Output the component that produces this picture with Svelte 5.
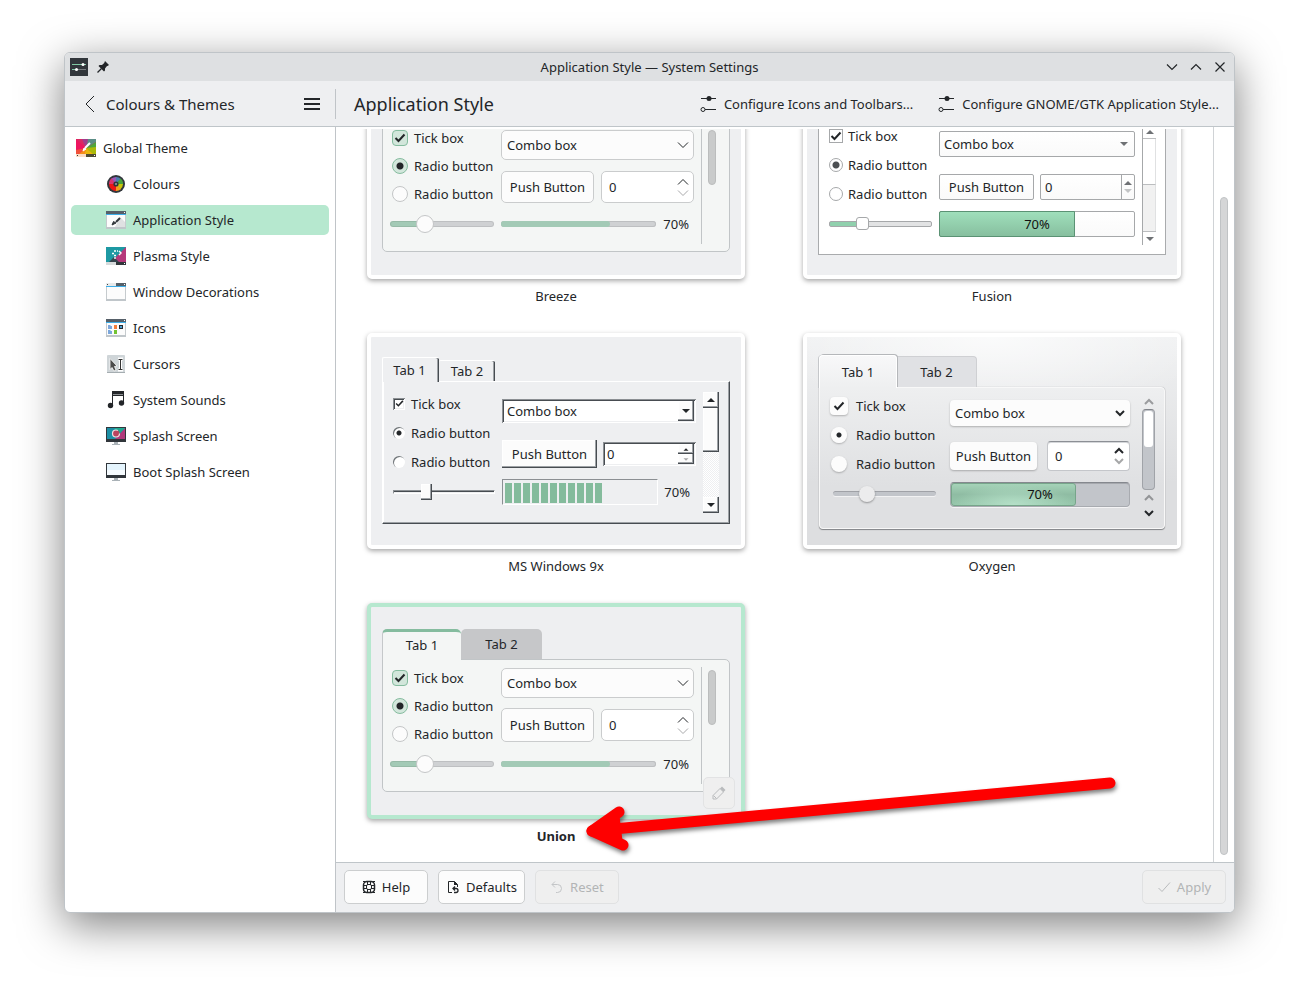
<script>
  const sections = [
    { name: "Global Theme", icon: "theme", top: true },
    { name: "Colours", icon: "colours" },
    { name: "Application Style", icon: "style" },
    { name: "Plasma Style", icon: "plasma" },
    { name: "Window Decorations", icon: "decorations" },
    { name: "Icons", icon: "icons" },
    { name: "Cursors", icon: "cursors" },
    { name: "System Sounds", icon: "sounds" },
    { name: "Splash Screen", icon: "splash" },
    { name: "Boot Splash Screen", icon: "boot" }
  ];

  // look picks the control drawing, id only tweaks it
  // cut: the row is scrolled past its tabs
  const styles = [
    { id: "breeze", look: "flat", name: "Breeze", cut: true },
    { id: "fusion", look: "fusion", name: "Fusion", inside: true, cut: true },
    { id: "windows", look: "win", name: "MS Windows 9x" },
    { id: "oxygen", look: "oxygen", name: "Oxygen", inside: true },
    { id: "union", look: "flat", name: "Union", selected: true }
  ];

  const progress = 70;
  let current = $state("Application Style");

  function open(event, name) {
    event.preventDefault();
    current = name;
  }
</script>

{#snippet screen(bar)}
  <rect x="0" y="0" width="20" height="18" fill="#fcfcfc" />
  <rect x="0" y="0" width="20" height="3" fill="#566069" />
  {#if bar}<rect x="0" y="0" width="10" height="3" fill="#e8eaeb" /><rect x="1" y="1" width="1" height="1" fill="#444" />{/if}
  <rect x="0" y="3" width="20" height="1" fill="#3daee9" />
  <rect x="18" y="1" width="1" height="1" fill="#fff" />
  <path d="M.5 4v13.5h19V4" fill="none" stroke="#c6cbce" />
  <rect x="0" y="16" width="20" height="2" fill="#c0c6ca" />
{/snippet}

{#snippet sectionIcon(name)}
  <svg class="section-icon" width="20" height="18" viewBox="0 0 20 18" aria-hidden="true">
    {#if name === "theme"}
      <rect width="20" height="15" fill="#ed1560" />
      <path d="M10 9 0 0h8z" fill="#da2a62" />
      <path d="M10 9 6 0h6z" fill="#a23c8e" />
      <path d="M10 9 12 0h8v3z" fill="#5b8d86" />
      <path d="M10 9 20 3v7z" fill="#4fa53c" />
      <path d="M10 9 20 8v7h-4z" fill="#aab90a" />
      <path d="M10 9 17 15H8z" fill="#e8b70c" />
      <path d="M10 9 9 15H2z" fill="#f58c1a" />
      <path d="M10 9 3 15H0v-4z" fill="#f0503a" />
      <path d="m14 4-5 5" stroke="#fff" stroke-width="2" />
      <path d="m7 12 1-3 2 1z" fill="#fff" stroke="#fff" />
      <rect y="15" width="10" height="3" fill="#fbdcc4" />
      <rect x="10" y="15" width="10" height="3" fill="#4d4a33" />
      <rect x="1" y="16" width="1" height="1" fill="#333" />
      <rect x="18" y="16" width="1" height="1" fill="#fff" />
    {:else if name === "colours"}
      <circle cx="10" cy="9" r="9" fill="#31363b" />
      <path d="M10 9 3 9a7 7 0 0 1 3-6z" fill="#d9356f" />
      <path d="M10 9 5.500 3.600A7 7 0 0 1 11 2z" fill="#9b59b6" />
      <path d="M10 9V2a7 7 0 0 1 5 2z" fill="#4a7fb0" />
      <path d="m10 9 4.500-5.400A7 7 0 0 1 17 10z" fill="#4aa33c" />
      <path d="m10 9 7 0a7 7 0 0 1-3 5.700z" fill="#c9c70a" />
      <path d="m10 9 5 5a7 7 0 0 1-6 2z" fill="#f39c1f" />
      <path d="m10 9 0 7a7 7 0 0 1-7-7z" fill="#ed1515" />
      <circle cx="10" cy="9" r="2.600" fill="#31363b" />
      <circle cx="10" cy="9" r="1" fill="#9aa0a5" />
    {:else if name === "style"}
      {@render screen(false)}
      <path d="m14 6 5 5v5H9z" fill="#dfe1e2" />
      <path d="m14 7-4 4" stroke="#31363b" stroke-width="2" />
      <path d="m6 14 1.500-3.500L10 12z" fill="#31363b" stroke="#31363b" />
    {:else if name === "plasma"}
      <rect width="20" height="15" fill="#1d99a3" />
      <path d="M20 0v15H5z" fill="#b5397b" />
      <path d="m3 15 5-5 5 5z" fill="#37444d" />
      <path d="M8 4h2M6 6.500h2M8 8.500h2M13 4l2 2-2 2M11 4h1" stroke="#fff" stroke-width="1.400" fill="none" />
      <circle cx="9" cy="11" r="1" fill="#eee" />
      <rect y="15" width="10" height="3" fill="#d6dadb" />
      <rect x="10" y="15" width="10" height="3" fill="#31363b" />
      <rect x="18" y="16" width="1" height="1" fill="#fff" />
    {:else if name === "decorations"}
      {@render screen(true)}
    {:else if name === "icons"}
      {@render screen(false)}
      <path d="M2 6h2l1 1h1v3H2zM2 11h2l1 1h1v3H2z" fill="#7ba7dc" />
      <rect x="8" y="6" width="3" height="4" fill="#f67f3c" />
      <rect x="8" y="11" width="3" height="4" fill="#72c332" />
      <rect x="13.500" y="6.500" width="3" height="3" fill="#4d9fd0" stroke="#232a30" />
    {:else if name === "cursors"}
      <rect x="1" width="18" height="18" rx="1" fill="#cfd5d8" />
      <rect x="1" y="17" width="18" height="1" fill="#a5adb1" />
      <path d="M4 3.500v11l2-2 2 3.500 2-1-1.500-3.500L11 11z" fill="#4c4c4c" stroke="#fff" stroke-width=".8" />
      <path d="M12 4h5M12 15h5M14.500 4v11" stroke="#fff" stroke-width="3" />
      <path d="M12.500 4.500h4M12.500 14.500h4M14.500 4v11" stroke="#333" />
    {:else if name === "sounds"}
      <path d="M6 0h12v12h-1V5H7v10H6z" fill="#232629" />
      <path d="M7 3.500h10" stroke="#8c8f91" />
      <circle cx="4.500" cy="14.500" r="2.700" fill="#232629" />
      <circle cx="15.500" cy="12" r="2.700" fill="#232629" />
    {:else}
      <rect width="20" height="15" fill="#31363b" />
      {#if name === "splash"}
        <rect x="1" y="1" width="18" height="11" fill="#1b8fa5" />
        <path d="M9 12 19 1v11z" fill="#b0397b" />
        <path d="M9 1h10L9 11z" fill="#1fa88f" />
        <circle cx="10" cy="6.500" r="3.500" fill="#b9435f" stroke="#f3dfe3" stroke-width="1.200" stroke-dasharray="18 4" />
      {:else}
        <rect x="1" y="1" width="18" height="11" fill="#e4f4fd" />
        <rect x="1" y="7" width="18" height="5" fill="#f6fbfe" />
      {/if}
      <path d="M8 15h4v2h2v1H6v-1h2z" fill="#aab2b7" />
    {/if}
  </svg>
{/snippet}

{#snippet arrow(look, dir, faded)}
  <svg class="arrow" class:up={dir === "up"} class:faded width="12" height="8" viewBox="0 0 12 8" aria-hidden="true">
    {#if look === "flat"}
      <path d="m1 1.500 5 5 5-5" fill="none" stroke="currentColor" />
    {:else if look === "oxygen"}
      <path d="m2 2 4 4 4-4" fill="none" stroke="currentColor" stroke-width="2" />
    {:else}
      <path d="M2 2h8L6 6z" fill="currentColor" />
    {/if}
  </svg>
{/snippet}

{#snippet sliders()}
  <svg width="16" height="16" viewBox="0 0 16 16" aria-hidden="true">
    <path d="M1 2.500h15M4 13.500h12" stroke="#232629" />
    <circle cx="9" cy="2.500" r="2.500" fill="#232629" />
    <circle cx="3" cy="13.500" r="2" fill="#eff0f1" stroke="#232629" />
  </svg>
{/snippet}

{#snippet preview(style)}
  <div class="preview {style.look} {style.id}">
    <div class="tabs" role="tablist">
      {#if !style.cut}
        <button class="tab active" role="tab" aria-selected="true">Tab 1</button>
        <button class="tab" role="tab" aria-selected="false">Tab 2</button>
      {/if}
    </div>
    <div class="panel">
      <div class="options">
        <label class="option">
          <span class="mark">
            <input type="checkbox" checked />
            <svg width="12" height="12" viewBox="0 0 12 12" aria-hidden="true">
              <path d="m1.500 6 3 3 6-6.500" fill="none" stroke="#232629" stroke-width="2" />
            </svg>
          </span>
          Tick box
        </label>
        <label class="option"><span class="mark"><input type="radio" name={style.id} checked /></span>Radio button</label>
        <label class="option"><span class="mark"><input type="radio" name={style.id} /></span>Radio button</label>
        <input class="slider" type="range" value="30" aria-label="Slider" />
      </div>
      <div class="fields">
        <div class="combo">
          <select aria-label="Combo box"><option>Combo box</option></select>
          <span class="drop">{@render arrow(style.look, "down", false)}</span>
        </div>
        <div class="pair">
          <button class="push">Push Button</button>
          <div class="spin">
            <input type="text" value="0" aria-label="Number" />
            <span class="steps">
              <span>{@render arrow(style.look, "up", false)}</span>
              <span>{@render arrow(style.look, "down", true)}</span>
            </span>
          </div>
        </div>
        <div class="progress">
          <div class="bar" role="progressbar" aria-label="Progress" aria-valuenow={progress}>
            <div class="fill" style="width: {progress}%"></div>
            {#if style.inside}<span class="value">{progress}%</span>{/if}
          </div>
          {#if !style.inside}<span>{progress}%</span>{/if}
        </div>
      </div>
      <div class="scroll" aria-hidden="true">
        {#if style.look !== "flat"}<span class="step">{@render arrow(style.look, "up", style.look === "oxygen")}</span>{/if}
        <div class="trough"><div class="thumb"></div></div>
        {#if style.look === "oxygen"}<span class="step">{@render arrow(style.look, "up", true)}</span>{/if}
        {#if style.look !== "flat"}<span class="step">{@render arrow(style.look, "down", false)}</span>{/if}
      </div>
    </div>
  </div>
{/snippet}

<div class="desktop">
  <div class="window">
    <header class="titlebar">
      <div class="corner">
        <svg width="18" height="18" viewBox="0 0 18 18" aria-hidden="true">
          <rect width="18" height="18" fill="#31363b" />
          <path d="M2 6.500h14" stroke="#80c9a4" />
          <path d="M2 11.500h5" stroke="#80c9a4" />
          <path d="M7 11.500h9" stroke="#777c80" />
          <circle cx="13" cy="6.500" r="1.500" fill="#fff" />
          <circle cx="6.500" cy="11.500" r="1.500" fill="#fff" />
        </svg>
        <svg width="12" height="12" viewBox="0 0 12 12" aria-hidden="true">
          <path d="M8 0 12 4 10.500 5 10 5 8 7.500V9.500L7 10.500 1.500 5 2.500 4H5L7.200 2z" fill="#232629" />
          <path d="m4.500 7.500-4 4" stroke="#232629" stroke-width="1.200" />
        </svg>
      </div>
      <h1>Application Style — System Settings</h1>
      <div class="corner end">
        <button aria-label="Minimise"><svg width="12" height="12" viewBox="0 0 12 12"><path d="m1 3.500 5 5 5-5" /></svg></button>
        <button aria-label="Maximise"><svg width="12" height="12" viewBox="0 0 12 12"><path d="m1 8.500 5-5 5 5" /></svg></button>
        <button aria-label="Close"><svg width="12" height="12" viewBox="0 0 12 12"><path d="m1.500 1.500 9 9m0-9-9 9" /></svg></button>
      </div>
    </header>

    <div class="toolbar">
      <div class="back">
        <button class="plain" aria-label="Back">
          <svg width="10" height="18" viewBox="0 0 10 18"><path d="M9 1 1 9l8 8" fill="none" stroke="#232629" /></svg>
        </button>
        <h2>Colours &amp; Themes</h2>
        <button class="plain" aria-label="Menu">
          <svg width="16" height="12" viewBox="0 0 16 12"><path d="M0 1h16M0 6h16M0 11h16" stroke="#232629" stroke-width="2" /></svg>
        </button>
      </div>
      <div class="page-title">
        <h2>Application Style</h2>
        <button class="plain">{@render sliders()}Configure Icons and Toolbars...</button>
        <button class="plain">{@render sliders()}Configure GNOME/GTK Application Style...</button>
      </div>
    </div>

    <div class="body">
      <nav>
        {#each sections as section}
          <a
            href="#{section.icon}"
            class:top={section.top}
            class:current={section.name === current}
            onclick={(e) => open(e, section.name)}>
            {@render sectionIcon(section.icon)}{section.name}
          </a>
        {/each}
      </nav>

      <main>
        <div class="view">
          <div class="gallery">
            <div class="grid">
              {#each styles as style}
                <div class="cell">
                  <div class="card" class:selected={style.selected}>
                    {@render preview(style)}
                    {#if style.selected}
                      <button class="edit" aria-label="Configure style" disabled>
                        <svg width="14" height="14" viewBox="0 0 14 14">
                          <path d="M1 13v-3.500L8 2.500l3.500 3.500-7 7zM1.500 9.500l3 3" fill="none" stroke="#b9bbbd" />
                          <path d="m8 2.500 2-2L13.500 4l-2 2z" fill="#b9bbbd" />
                        </svg>
                      </button>
                    {/if}
                  </div>
                  <span class="name" class:bold={style.selected}>{style.name}</span>
                  {#if style.selected}
                    <svg class="pointer" width="550" height="90" viewBox="0 0 550 90" aria-hidden="true">
                      <g fill="none" stroke="#fe0000" stroke-width="11" stroke-linecap="round" stroke-linejoin="round">
                        <path d="M530 11 12 59" />
                        <path d="M39 40 12 59l31 14" fill="#fe0000" />
                      </g>
                    </svg>
                  {/if}
                </div>
              {/each}
            </div>
          </div>
          <div class="scrollbar"><div class="handle"></div></div>
        </div>

        <footer>
          <button class="action">
            <svg width="14" height="14" viewBox="0 0 14 14" fill="none" stroke="#232629">
              <rect x="1.500" y="1.500" width="11" height="11" rx="3.500" stroke-width="1.500" />
              <rect x="4.500" y="4.500" width="5" height="5" rx="1.500" />
              <path d="M5.500 1v4M8.500 1v4M5.500 9v4M8.500 9v4M1 5.500h4M1 8.500h4M9 5.500h4M9 8.500h4M1 1.500h2M11 1.500h2M1 12.500h2M11 12.500h2" />
            </svg>
            Help
          </button>
          <button class="action">
            <svg width="14" height="14" viewBox="0 0 14 14" fill="none" stroke="#232629">
              <path d="M6 12.500H2.500v-11h6l3 3V7" />
              <path d="M8 1v4h4z" fill="#232629" stroke="none" />
              <path d="M9 6.500 7 8.500l2 2M7 8.500h3a2 2 0 0 1 0 4H8" stroke-width="1.300" />
            </svg>
            Defaults
          </button>
          <button class="action" disabled>
            <svg width="14" height="14" viewBox="0 0 14 14" fill="none" stroke="#c3c5c7">
              <path d="M5 1.500 2 4.500l3 3M2 4.500h5.500a4 4 0 0 1 0 8H6" />
            </svg>
            Reset
          </button>
          <button class="action apply" disabled>
            <svg width="14" height="14" viewBox="0 0 14 14" fill="none" stroke="#b9bbbd"><path d="m1.500 8 3.500 3.500 8-9" /></svg>
            Apply
          </button>
        </footer>
      </main>
    </div>
  </div>
</div>

<style>
  :global(body) {
    background: #fff;
  }
  .desktop,
  .desktop :global(*) {
    box-sizing: border-box;
  }
  .desktop {
    height: 100vh;
    padding: 52px 64px 76px;
    overflow: hidden;
    color: #232629;
    font: 13px/18px "Noto Sans", sans-serif;
  }
  button,
  input,
  select {
    margin: 0;
    padding: 0;
    border: 0;
    background: none;
    color: inherit;
    font: inherit;
  }
  h1,
  h2 {
    margin: 0;
    font-weight: 400;
  }
  svg {
    display: block;
    flex: none;
  }
  .window {
    display: flex;
    flex-direction: column;
    height: 100%;
    overflow: hidden;
    border: 1px solid #bfc4c8;
    border-radius: 6px;
    background: #fff;
    box-shadow: 0 12px 44px rgba(0, 0, 0, 0.5);
  }

  /* title bar and toolbar */
  .titlebar {
    display: flex;
    align-items: center;
    height: 28px;
    background: #dee0e2;
  }
  .titlebar h1 {
    font-size: 13px;
  }
  .corner {
    display: flex;
    flex: 1;
    align-items: center;
    gap: 9px;
    padding: 0 8px 0 5px;
  }
  .corner.end {
    justify-content: flex-end;
    gap: 12px;
  }
  .corner.end path {
    fill: none;
    stroke: #232629;
    stroke-width: 1.2;
  }
  .toolbar {
    display: flex;
    align-items: center;
    height: 46px;
    border-bottom: 1px solid #bfc5c9;
    background: #eeeff1;
  }
  .plain {
    display: flex;
    align-items: center;
    gap: 8px;
  }
  .back {
    display: flex;
    align-items: center;
    width: 271px;
    height: 30px;
    padding: 0 15px 0 20px;
    border-right: 1px solid #c0c4c8;
  }
  .back h2 {
    flex: 1;
    margin-left: 11px;
    font-size: 15px;
  }
  .page-title {
    display: flex;
    flex: 1;
    align-items: center;
    gap: 25px;
    padding: 0 15px 0 18px;
  }
  .page-title h2 {
    flex: 1;
    font-size: 18px;
  }

  .body {
    display: flex;
    flex: 1;
    min-height: 0;
  }
  nav {
    width: 271px;
    padding: 3px 6px;
    border-right: 1px solid #c0c4c8;
  }
  nav a {
    display: flex;
    align-items: center;
    height: 30px;
    margin: 3px 0 6px;
    padding-left: 35px;
    gap: 7px;
    border-radius: 5px;
    color: inherit;
    text-decoration: none;
  }
  nav a.top {
    padding-left: 5px;
  }
  nav a.current {
    background: #b6e8cf;
  }
  main {
    display: flex;
    flex: 1;
    flex-direction: column;
    min-width: 0;
  }
  .view {
    display: flex;
    flex: 1;
    min-height: 0;
  }
  /* scrolled to the end, the first row runs out at the top */
  .gallery {
    display: flex;
    flex: 1;
    flex-direction: column;
    justify-content: flex-end;
    margin-top: 2px;
    overflow: hidden;
  }
  .grid {
    display: grid;
    grid-template-columns: 1fr 1fr;
    padding: 0 3px 0 2px;
  }
  .scrollbar {
    display: flex;
    width: 21px;
    padding: 70px 6px 7px;
    border-left: 1px solid #d0d3d6;
  }
  .handle {
    flex: 1;
    border: 1px solid #c0c3c5;
    border-radius: 4px;
    background: #d5d6d7;
  }
  .cell {
    position: relative;
    display: flex;
    flex-direction: column;
    align-items: center;
    gap: 8px;
    height: 270px;
    padding-top: 11px;
  }
  .card {
    position: relative;
    width: 378px;
    height: 216px;
    border: 4px solid #fff;
    border-radius: 5px;
    background: #eeeff1;
    box-shadow: 0 2px 5px rgba(0, 0, 0, 0.35);
  }
  .card.selected {
    border-color: #b6e8cf;
  }
  .bold {
    font-weight: 700;
  }
  .edit {
    position: absolute;
    right: 6px;
    bottom: 6px;
    display: grid;
    place-items: center;
    width: 32px;
    height: 32px;
    border: 1px solid #e2e3e4;
    border-radius: 5px;
    background: #efefef;
  }
  .pointer {
    position: absolute;
    left: 242px;
    top: 180px;
    filter: drop-shadow(1px 3px 2px rgba(0, 0, 0, 0.5));
  }

  /* preview skeleton, sized by the variables of each look */
  .preview {
    display: flex;
    flex-direction: column;
    height: 100%;
    padding: var(--frame);
  }
  .tabs {
    display: flex;
    align-items: flex-end;
    height: var(--tabs);
  }
  .tab {
    position: relative;
    height: 100%;
  }
  .panel {
    display: grid;
    flex: 1;
    grid-template-columns: var(--options) 1fr var(--scroll);
    column-gap: var(--gap);
    padding: 0 var(--right) 0 var(--left);
  }
  .options {
    display: grid;
    grid-template-rows: var(--option-rows);
    align-content: start;
    align-items: center;
    padding-top: var(--options-top);
  }
  .option {
    display: flex;
    align-items: center;
    gap: var(--mark-gap);
    white-space: nowrap;
  }
  .mark {
    display: grid;
    place-items: center;
    width: var(--mark);
    height: var(--mark);
  }
  .mark > :global(*) {
    grid-area: 1 / 1;
  }
  .mark svg {
    position: relative;
    pointer-events: none;
  }
  .mark input {
    appearance: none;
    width: 100%;
    height: 100%;
  }
  .mark input[type="radio"] {
    border-radius: 50%;
  }
  .slider {
    appearance: none;
    width: 100%;
    height: 20px;
  }
  .slider::-webkit-slider-thumb {
    appearance: none;
  }
  .fields {
    display: grid;
    grid-template-rows: var(--field-rows);
    align-content: start;
    align-items: center;
    padding-top: var(--fields-top, 0);
  }
  .combo {
    display: grid;
    align-items: center;
  }
  .combo > :global(*) {
    grid-area: 1 / 1;
  }
  .combo select {
    appearance: none;
    width: 100%;
    height: 100%;
    padding-left: 5px;
  }
  .drop {
    justify-self: end;
    margin-right: 4px;
    pointer-events: none;
  }
  .pair {
    display: flex;
    align-items: center;
    gap: 7px;
  }
  .push {
    white-space: nowrap;
  }
  .spin {
    display: flex;
    flex: 1;
  }
  .spin input {
    flex: 1;
    width: 0;
    padding-left: 7px;
  }
  .steps {
    display: flex;
    flex-direction: column;
    align-items: center;
    justify-content: center;
    margin-right: 4px;
  }
  .progress {
    display: flex;
    align-items: center;
    gap: 7px;
  }
  .bar {
    flex: 1;
    display: grid;
    align-items: center;
  }
  .bar > :global(*) {
    grid-area: 1 / 1;
  }
  .fill {
    height: 100%;
  }
  .value {
    justify-self: center;
    color: #111;
  }
  .scroll {
    display: flex;
    flex-direction: column;
  }
  .trough {
    flex: 1;
  }
  .step {
    display: grid;
    place-items: center;
  }
  .arrow.up {
    transform: scaleY(-1);
  }
  .arrow.faded {
    opacity: 0.4;
  }

  /* Breeze and Union */
  .flat {
    --frame: 22px 11px 23px;
    --tabs: 30px;
    --options: 104px;
    --scroll: 28px;
    --gap: 7px;
    --left: 7px;
    --right: 0;
    --options-top: 4px;
    --option-rows: 28px 28px 28px 32px;
    --field-rows: 50px 34px 40px;
    --mark: 16px;
    --mark-gap: 6px;
  }
  .flat.union {
    --field-rows: 46px 38px 40px;
  }
  .flat .tab {
    width: 81px;
    border-radius: 5px 5px 0 0;
    background: #c6c7c9;
  }
  .flat .tab.active {
    width: 79px;
    height: 31px;
    margin-bottom: -1px;
    padding-bottom: 3px;
    border: 0 solid #c5c8ca;
    border-top-color: #85bc9f;
    border-width: 3px 0 0 1px;
    background: #f4f6f5;
  }
  .flat .panel {
    border: 1px solid #c1c5c7;
    border-radius: 0 5px 5px 5px;
    background: #f4f6f5;
  }
  .flat .option {
    padding-left: 2px;
  }
  .flat .mark input {
    border: 1px solid #c4c6c7;
    background: #fcfcfc;
  }
  .flat .mark input[type="checkbox"] {
    border-radius: 4px;
  }
  .flat .mark input:checked {
    border-color: #85bc9f;
    background: #d2e6db;
  }
  .flat .mark input[type="radio"]:checked {
    background: radial-gradient(circle, #232629 3px, #d2e6db 4px);
  }
  .flat .slider::-webkit-slider-runnable-track {
    height: 6px;
    border: 1px solid #bdbfc1;
    border-radius: 3px;
    background: linear-gradient(90deg, #a3cab6 34px, #cfd1d3 34px) border-box;
    border-color: rgba(0, 0, 0, 0.08);
  }
  .flat .slider::-webkit-slider-thumb {
    width: 18px;
    height: 18px;
    margin-top: -7px;
    border: 1px solid #c4c6c7;
    border-radius: 50%;
    background: #fcfcfc;
  }
  .flat .combo,
  .flat .push,
  .flat .spin {
    height: 30px;
    border: 1px solid #cacccd;
    border-radius: 5px;
    background: #fcfcfc;
  }
  .flat .push {
    width: 93px;
    height: 32px;
  }
  .flat.union .push {
    height: 34px;
  }
  .flat .spin {
    height: 32px;
    background: #fff;
  }
  .flat .steps {
    gap: 3px;
  }
  .flat .bar {
    height: 6px;
    border-radius: 3px;
    background: #cfd1d3;
    box-shadow: inset 0 0 0 1px #bdbfc1;
  }
  .flat .fill {
    border-radius: 3px;
    background: #a3cab6;
  }
  .flat .progress > span {
    margin-right: 5px;
  }
  .flat .scroll {
    margin: 7px 0;
    padding: 3px 6px;
    border-left: 1px solid #c1c5c7;
  }
  .flat .thumb {
    width: 8px;
    height: 55px;
    border: 1px solid #bbbdbd;
    border-radius: 4px;
    background: #c9cbcb;
  }

  /* Fusion */
  .fusion {
    --frame: 20px 11px;
    --tabs: 23px;
    --options: 103px;
    --scroll: 14px;
    --gap: 7px;
    --left: 10px;
    --right: 9px;
    --options-top: 10px;
    --option-rows: 29px 29px 29px 32px;
    --fields-top: 12px;
    --field-rows: 42px 44px 30px;
    --mark: 14px;
    --mark-gap: 5px;
  }
  .fusion .panel {
    border: 1px solid #a9abad;
    background: #fff;
  }
  .fusion .mark input {
    border: 1px solid #a6a8aa;
    background: #fff;
  }
  .fusion .mark input[type="radio"]:checked {
    background: radial-gradient(circle, #4c4f52 3px, #fff 4px);
  }
  .fusion .slider::-webkit-slider-runnable-track {
    height: 6px;
    border: 1px solid #a6a8aa;
    border-radius: 2px;
    background: linear-gradient(90deg, #90d0ad 34px, #e2e3e4 34px);
  }
  .fusion .slider::-webkit-slider-thumb {
    width: 13px;
    height: 13px;
    margin-top: -5px;
    border: 1px solid #a6a8aa;
    border-radius: 3px;
    background: #fff;
  }
  .fusion .combo,
  .fusion .push,
  .fusion .spin,
  .fusion .bar {
    height: 26px;
    border: 1px solid #a6a8aa;
    border-radius: 2px;
    background: linear-gradient(#fff, #fafafa);
  }
  .fusion .combo select {
    padding-left: 4px;
  }
  .fusion .push {
    width: 95px;
  }
  .fusion .spin input {
    padding-left: 4px;
  }
  .fusion .pair {
    gap: 6px;
  }
  .fusion .steps {
    margin: 0;
    border-left: 1px solid #a6a8aa;
    color: #6e7174;
  }
  .fusion .drop,
  .fusion .step {
    color: #6e7174;
  }
  .fusion .fill {
    height: 26px;
    margin: -1px;
    border: 1px solid #5b9274;
    border-radius: 2px 0 0 2px;
    background: linear-gradient(#9fdfbb, #87bf9f);
  }
  .fusion .scroll {
    margin: 14px 0 9px;
    border-left: 1px solid #a6a8aa;
  }
  .fusion .step {
    height: 13px;
  }
  .fusion .trough {
    border: 1px solid #bbbdbf;
    border-width: 1px 0;
    background: #f1f1f1;
    box-shadow: inset -1px 0 #e0e1e2;
  }
  .fusion .thumb {
    height: 46px;
    border-right: 1px solid #e0e1e2;
    border-bottom: 1px solid #bbbdbf;
    background: #fff;
  }

  /* MS Windows 9x */
  .win {
    --frame: 20px 11px 21px;
    --tabs: 24px;
    --options: 102px;
    --scroll: 16px;
    --gap: 7px;
    --left: 10px;
    --right: 10px;
    --options-top: 7px;
    --option-rows: 29px 29px 29px 32px;
    --fields-top: 1px;
    --field-rows: 56px 30px 46px;
    --mark: 12px;
    --mark-gap: 6px;
    --raised: inset -1px -1px #474c51, inset -2px -2px #9da1a5, inset 1px 1px #fff;
    --sunken: inset 1px 1px #8b8f93, inset -1px -1px #fff, inset 2px 2px #474c51, inset -2px -2px #eeeff1;
  }
  .win .tab {
    width: 56px;
    height: 21px;
    border: solid #fff;
    border-width: 1px 0 0;
    border-radius: 2px 2px 0 0;
    box-shadow: inset -1px 0 #474c51, inset -2px 0 #9da1a5;
  }
  .win .tab.active {
    width: 57px;
    height: 25px;
    margin-bottom: -1px;
    padding-right: 3px;
    border-width: 1px 0 0 1px;
    background: #eeeff1;
  }
  .win .panel {
    border: 1px solid #474c51;
    border-top-color: #fff;
    border-left-color: #fff;
    box-shadow: inset -1px -1px #9da1a5, inset 1px 0 #fff;
  }
  .win .mark input {
    background: #fff;
    box-shadow: var(--sunken);
  }
  .win .mark svg {
    width: 9px;
    height: 9px;
  }
  .win .mark input[type="radio"] {
    width: 12px;
    height: 12px;
    box-shadow: inset 1px 1px #6e7377;
  }
  .win .mark input[type="radio"]:checked {
    background: radial-gradient(circle, #232629 2px, #fff 3px);
  }
  .win .slider::-webkit-slider-runnable-track {
    height: 4px;
    border: 1px solid #fff;
    border-top-color: #8b8f93;
    border-left-color: #8b8f93;
    background: linear-gradient(#474c51 1px, #eeeff1 1px);
  }
  .win .slider::-webkit-slider-thumb {
    appearance: none;
    width: 11px;
    height: 16px;
    margin-top: -7px;
    background: #fcfcfc;
    box-shadow: var(--raised);
  }
  .win .combo,
  .win .spin {
    height: 24px;
    padding: 2px;
    background: #fff;
    box-shadow: var(--sunken);
  }
  .win .combo select {
    padding-left: 3px;
  }
  .win .drop {
    display: grid;
    place-items: center;
    width: 16px;
    height: 100%;
    margin: 0;
    background: #fcfcfc;
    box-shadow: var(--raised);
  }
  .win .push {
    width: 95px;
    height: 28px;
    background: #fcfcfc;
    box-shadow: var(--raised);
  }
  .win .pair {
    gap: 6px;
  }
  .win .spin input {
    padding-left: 2px;
  }
  .win .steps {
    margin: 0;
  }
  .win .steps span {
    display: grid;
    place-items: center;
    width: 16px;
    height: 10px;
    overflow: hidden;
    background: #fcfcfc;
    box-shadow: var(--raised);
  }
  .win .steps .arrow {
    width: 8px;
    height: 5px;
  }
  .win .bar {
    height: 26px;
    padding: 3px 14px 3px 2px;
    border: 1px solid #fff;
    border-top-color: #8b8f93;
    border-left-color: #8b8f93;
  }
  .win .fill {
    height: 20px;
    background: repeating-linear-gradient(90deg, #84bb9c 0 7px, transparent 7px 9px);
  }
  .win .progress {
    gap: 6px;
  }
  .win .progress > span {
    margin-right: 6px;
  }
  .win .scroll {
    margin: 10px 0;
  }
  .win .step {
    height: 16px;
    background: #fcfcfc;
    box-shadow: var(--raised);
  }
  .win .trough {
    background: repeating-conic-gradient(#eeeff1 0 25%, #fff 0 50%) 0 0 / 2px 2px;
  }
  .win .thumb {
    height: 44px;
    background: #fcfcfc;
    box-shadow: var(--raised);
  }

  /* Oxygen */
  .oxygen {
    --frame: 18px 12px;
    --tabs: 32px;
    --options: 108px;
    --scroll: 13px;
    --gap: 12px;
    --left: 10px;
    --right: 9px;
    --options-top: 3px;
    --option-rows: 29px 29px 29px 30px;
    --field-rows: 50px 36px 40px;
    --mark: 18px;
    --mark-gap: 8px;
    background: radial-gradient(ellipse 60% 40% at 50% 0, rgba(255, 255, 255, 0.7), transparent), linear-gradient(#f0f1f2, #dddee0 70%);
  }
  .oxygen .tab {
    width: 80px;
    height: 31px;
    border: 1px solid #cfd0d3;
    border-bottom: 0;
    border-left: 0;
    border-radius: 0 4px 0 0;
    background: #e0e1e4;
  }
  .oxygen .tab.active {
    z-index: 1;
    width: 78px;
    height: 33px;
    margin-bottom: -1px;
    border: 1px solid #fff;
    border-bottom: 0;
    border-radius: 4px 4px 0 0;
    background: linear-gradient(#f8f8f9, #eeeff0);
    box-shadow: 1px -1px #b5b7ba, -1px 0 #c5c7ca;
    clip-path: inset(-2px -2px 0);
  }
  .oxygen .panel {
    border: 1px solid #f8f8f8;
    border-radius: 0 4px 4px 4px;
    background: linear-gradient(#eeeff0, #dfe0e2 70%);
    box-shadow: 0 1px 1px #808285, 0 0 1px #9a9c9f;
  }
  .oxygen .mark input {
    border-radius: 4px;
    background: #fcfcfc;
    box-shadow: 0 1px 2px rgba(0, 0, 0, 0.25);
  }
  .oxygen .mark input[type="radio"] {
    width: 16px;
    height: 16px;
    border-radius: 50%;
  }
  .oxygen .mark input[type="radio"]:checked {
    background: radial-gradient(circle, #232629 2px, #fcfcfc 3px);
  }
  .oxygen .slider {
    width: 103px;
    margin-left: 3px;
  }
  .oxygen .slider::-webkit-slider-runnable-track {
    height: 5px;
    border-top: 1px solid #a0a2a7;
    border-radius: 3px;
    background: #c2c5ca;
    box-shadow: 0 1px #f2f2f3;
  }
  .oxygen .slider::-webkit-slider-thumb {
    width: 16px;
    height: 16px;
    margin-top: -6px;
    border-radius: 50%;
    background: #ececed;
    box-shadow: 0 1px 2px rgba(0, 0, 0, 0.35);
  }
  .oxygen .combo,
  .oxygen .push {
    height: 26px;
    border-radius: 4px;
    background: #fcfcfc;
    box-shadow: 0 1px 2px rgba(0, 0, 0, 0.25);
  }
  .oxygen .push {
    width: 87px;
    height: 28px;
  }
  .oxygen .pair {
    gap: 10px;
  }
  .oxygen .spin {
    height: 30px;
    border: 1px solid #c4c6ca;
    border-top-color: #8c8f95;
    border-radius: 4px;
    background: #fff;
    box-shadow: inset 0 1px #d5d7da;
  }
  .oxygen .steps {
    gap: 2px;
  }
  .oxygen .bar {
    height: 25px;
    border: 1px solid #a8abb0;
    border-top-color: #85888e;
    border-radius: 4px;
    background: #c2c5ca;
    box-shadow: 0 1px #f4f4f5, inset 0 1px #a5a8ad;
  }
  .oxygen .fill {
    height: 23px;
    border: 1px solid #77a58a;
    border-radius: 3px;
    background: radial-gradient(ellipse at 50% 100%, #b5e0c8, transparent 70%), linear-gradient(#a5d3b8, #8fbca3 50%, #96c7ab);
  }
  .oxygen .scroll {
    align-items: center;
    margin: 6px 0 8px;
  }
  .oxygen .step {
    height: 15px;
  }
  .oxygen .trough {
    flex: none;
    width: 13px;
    height: 81px;
    padding: 1px;
    border: 1px solid #a0a3a8;
    border-top-color: #808389;
    border-radius: 4px;
    background: #c2c5ca;
  }
  .oxygen .thumb {
    height: 36px;
    border-radius: 3px;
    background: #fff;
  }

  footer {
    display: flex;
    align-items: center;
    gap: 10px;
    height: 50px;
    padding: 0 8px 2px;
    border-top: 1px solid #bfc5c9;
    background: #eeeff1;
  }
  .action {
    display: flex;
    align-items: center;
    justify-content: center;
    gap: 6px;
    min-width: 84px;
    height: 34px;
    padding: 0 7px;
    border: 1px solid #cccecf;
    border-radius: 5px;
    background: #fcfcfc;
  }
  .action:disabled {
    border-color: #e0e1e2;
    background: #efefef;
    color: #b2b4b5;
  }
  .apply {
    margin-left: auto;
  }
</style>
